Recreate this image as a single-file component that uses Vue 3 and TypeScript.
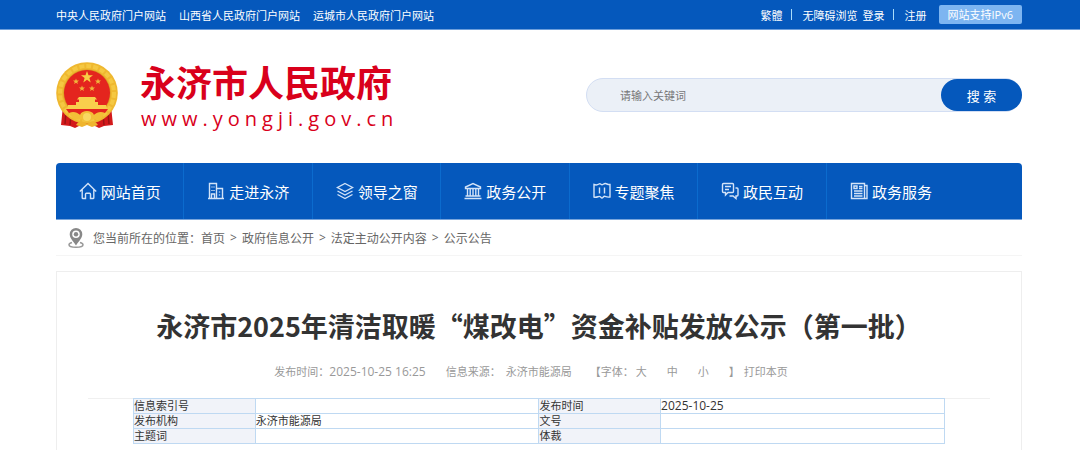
<script setup lang="ts">
import { ref } from 'vue'

interface NavItem {
  label: string
  icon: string
}

const portals: string[] = ['中央人民政府门户网站', '山西省人民政府门户网站', '运城市人民政府门户网站']

const navItems: NavItem[] = [
  { label: '网站首页', icon: 'M.8 9.500 9 1.500l8.200 8M3.200 7.500v8.200c0 .5.300.8.800.8h2.500v-4.300c0-.6.300-.9.900-.9h3.200c.6 0 .9.300.9.900v4.300H14c.5 0 .8-.3.800-.8V7.500' },
  { label: '走进永济', icon: 'M2.500 16V1.500h7V16M9.500 6.500h6V16M1 16.500h16M5 4.500v1M7 4.500v1M5 8v1M7 8v1M4.500 16v-4h3v4M12.500 9.500v1M12.500 12.500v1' },
  { label: '领导之窗', icon: 'M9 1.500 16.500 5.500 9 9.500 1.500 5.500ZM1.500 9 9 13l7.500-4M1.500 12.500 9 16.500l7.500-4' },
  { label: '政务公开', icon: 'M1.500 6.500V5L9 1.500 16.500 5v1.500ZM3.500 7v7M6.200 7v7M9 7v7M11.800 7v7M14.500 7v7M1.500 14h15M.5 16.500h17' },
  { label: '专题聚焦', icon: 'M1 2.500c2 .8 3.500.5 5-.5 1.500-.8 2 .8 3 .8s2-1.600 3.500-1.300S15 2.800 17 2.500v12.500c-2 .5-3.500 0-5-.6S10 16 9 16s-1.500-2-3-1.600S3 15.800 1 15ZM6.500 5.500v6M11.500 5.500v6' },
  { label: '政民互动', icon: 'M2.500 1.500h9c.6 0 1 .4 1 1v7c0 .6-.4 1-1 1H7L4.500 13v-2.500h-2c-.6 0-1-.4-1-1v-7c0-.6.400-1 1-1ZM4 4.500h6M4 7.500h4M14.500 6H16c.6 0 1 .4 1 1v6c0 .6-.4 1-1 1h-1v2.500L12 14H8.500' },
  { label: '政务服务', icon: 'M1.500 1.500h13v15h-13ZM14.500 3.500H17v13h-2.500M4 4h3v2.500H4ZM9 4.500h3.500M9 6.500h3.500M4 9h8.500M4 11.500h8.500M4 14h8.500' },
]

const crumbs: string[] = ['首页', '政府信息公开', '法定主动公开内容', '公示公告']
const sizes: string[] = ['大', '中', '小']

const rows: string[][] = [
  ['信息索引号', '', '发布时间', '2025-10-25'],
  ['发布机构', '永济市能源局', '文号', ''],
  ['主题词', '', '体裁', ''],
]

const keyword = ref('')
</script>

<template>
  <div class="page">
    <div class="topbar">
      <nav class="portals">
        <a v-for="p in portals" :key="p" href="#">{{ p }}</a>
      </nav>
      <div class="tools">
        <a href="#">繁體</a>
        <span class="bar"></span>
        <a href="#">无障碍浏览</a>
        <a class="login" href="#">登录</a>
        <span class="bar"></span>
        <a href="#">注册</a>
        <a class="ipv6" href="#">网站支持IPv6</a>
      </div>
    </div>

    <header class="header">
      <a class="brand" href="#">
        <svg class="emblem" viewBox="0 0 62 66" aria-hidden="true">
          <path d="M7 44 5 63l9 1 5 2 8-4h8l8 4 5-2 9-1-2-19-12 8H19Z" fill="#d3191b" />
          <path d="M10 50 9 62M15 52l-1 11M52 50l1 12M47 52l1 11" stroke="#9c1414" stroke-width="1.500" />
          <circle cx="31" cy="31" r="30.800" fill="#efb830" />
          <circle cx="31" cy="31" r="27" fill="none" stroke="#f5c842" stroke-width="4" stroke-dasharray="5 2" />
          <circle cx="31" cy="31" r="23.800" fill="#dc9f25" />
          <circle cx="31" cy="31" r="23" fill="#e4251e" />
          <path d="m31 9 1.500 4.300h4.500l-3.600 2.700 1.300 4.400L31 17.800l-3.700 2.600 1.300-4.400L25 13.300h4.500Z" fill="#f8cd45" />
          <g fill="#f0b53c">
            <path d="m20 16.500.8 2 2.200.1-1.700 1.300.6 2.100-1.900-1.200-1.900 1.200.6-2.100-1.700-1.300 2.200-.1Z" />
            <path d="m42 16.500.8 2 2.200.1-1.700 1.300.6 2.100-1.900-1.200-1.900 1.200.6-2.100-1.700-1.300 2.200-.1Z" />
            <path d="m26 23.500.8 2 2.200.1-1.700 1.300.6 2.100-1.900-1.200-1.900 1.200.6-2.100-1.700-1.300 2.200-.1Z" />
            <path d="m36 23.500.8 2 2.200.1-1.700 1.300.6 2.100-1.900-1.200-1.900 1.200.6-2.100-1.700-1.300 2.200-.1Z" />
          </g>
          <path d="M23 35h16l2 2.500h-2V40h3v3h8l1 4H11l1-4h8v-3h3v-2.500h-2Z" fill="#f9cf4c" />
          <path d="M10 47h42l-3 4H13Z" fill="#e4251e" />
          <path d="M13 51c4-2 8-1 11 2 1-3 4-4 7-4s6 1 7 4c3-3 7-4 11-2l-5 7-7-1-6 4-6-4-7 1Z" fill="#f3bf37" />
          <circle cx="31" cy="55" r="4" fill="#f9d861" />
          <path d="M20 63c3-5 7-4 11-1 4-3 8-4 11 1l-6 2-5-2-5 2Z" fill="#efb52e" />
        </svg>
        <span class="names">
          <strong>永济市人民政府</strong>
          <span class="domain">www.yongji.gov.cn</span>
        </span>
      </a>
      <form class="search" @submit.prevent>
        <input v-model="keyword" type="text" placeholder="请输入关键词" aria-label="请输入关键词" />
        <button type="submit">搜 索</button>
      </form>
    </header>

    <div class="wrap">
      <nav class="mainnav">
        <a v-for="item in navItems" :key="item.label" href="#">
          <svg viewBox="0 0 18 18" aria-hidden="true"><path :d="item.icon" /></svg>
          <span>{{ item.label }}</span>
        </a>
      </nav>

      <div class="crumbs">
        <svg viewBox="0 0 16 20" aria-hidden="true">
          <path d="M4 14.500c-2 .5-3 1.200-3 2.200 0 1.600 3 2.500 7 2.500s7-.9 7-2.500c0-1-1-1.700-3-2.200" fill="none" stroke="#999" stroke-width="1.500" />
          <path fill-rule="evenodd" d="M8 0a6.300 6.300 0 0 0-6.300 6.300C1.700 10 5 13 8 17.500c3-4.500 6.300-7.500 6.300-11.200A6.300 6.300 0 0 0 8 0Zm0 2.500a3.800 3.800 0 1 1 0 7.600 3.800 3.800 0 0 1 0-7.600Z" fill="#888" />
          <circle cx="8" cy="6.300" r="2.200" fill="#888" />
        </svg>
        <span>您当前所在的位置：</span>
        <template v-for="(c, i) in crumbs" :key="c">
          <span v-if="i > 0" class="sep">&gt;</span>
          <a href="#">{{ c }}</a>
        </template>
      </div>

      <main class="card">
        <h1>永济市2025年清洁取暖“煤改电”资金补贴发放公示（第一批）</h1>
        <div class="meta">
          <span>发布时间：<time>2025-10-25 16:25</time></span>
          <span class="source"><span>信息来源：</span><span>永济市能源局</span></span>
          <span class="sizes">
            <span class="size-label">【字体：</span>
            <button v-for="s in sizes" :key="s" type="button">{{ s }}</button>
            <span>】</span>
          </span>
          <button type="button">打印本页</button>
        </div>
        <div class="detail">
          <table>
            <tbody>
              <tr v-for="row in rows" :key="row[0]">
                <th scope="row">{{ row[0] }}</th>
                <td>{{ row[1] }}</td>
                <th scope="row">{{ row[2] }}</th>
                <td>{{ row[3] }}</td>
              </tr>
            </tbody>
          </table>
        </div>
      </main>
    </div>
  </div>
</template>

<style>
body {
  margin: 0;
  background: #fff;
}
</style>

<style scoped>
.page {
  height: 100vh;
  overflow: hidden;
  font-family: "Open Sans", "Noto Sans CJK SC", sans-serif;
  font-size: 11px;
  color: #333;
}
.page * {
  box-sizing: border-box;
}
a {
  color: inherit;
  text-decoration: none;
}
button {
  border: 0;
  padding: 0;
  background: none;
  font: inherit;
  color: inherit;
  cursor: pointer;
}
.topbar {
  display: flex;
  justify-content: space-between;
  align-items: center;
  height: 30px;
  padding: 0 58px 0 56px;
  background: #0558bc;
  border-bottom: 1px solid #6d9edb;
  color: #fff;
}
.portals {
  display: flex;
  gap: 13px;
}
.tools {
  display: flex;
  align-items: center;
}
.bar {
  width: 1px;
  height: 11px;
  margin: 0 11px 0 8px;
  background: #a9dcfa;
}
.login {
  margin-left: 5px;
}
.ipv6 {
  height: 19px;
  margin-left: 12px;
  padding: 0 9px;
  border-radius: 2px;
  background: #7db5f1;
  line-height: 19px;
}
.header {
  display: flex;
  justify-content: space-between;
  height: 133px;
  padding: 32px 58px 0 56px;
}
.brand {
  display: flex;
  gap: 22px;
  color: #d9001b;
}
.emblem {
  width: 62px;
  height: 66px;
}
.names {
  display: flex;
  flex-direction: column;
}
.names strong {
  font-family: "Liberation Sans", "Noto Sans CJK SC", sans-serif;
  font-size: 36px;
  line-height: 46px;
  font-weight: 700;
}
.domain {
  padding-left: 1px;
  font-size: 20px;
  line-height: 22px;
  letter-spacing: 5px;
}
.search {
  display: flex;
  width: 436px;
  height: 34px;
  margin-top: 16px;
  border: 1px solid #d3def3;
  border-radius: 17px;
  background: #ebf0f7;
}
.search input {
  flex: 1;
  min-width: 0;
  padding: 0 0 0 33px;
  border: 0;
  outline: 0;
  background: none;
  font: inherit;
}
.search input::placeholder {
  color: #777;
  opacity: 1;
}
.search button {
  width: 81px;
  margin-right: -1px;
  border-radius: 17px;
  background: #0558bc;
  color: #fff;
  font-size: 13px;
}
.wrap {
  padding: 0 58px 0 56px;
}
.mainnav {
  display: flex;
  height: 57px;
  border-radius: 4px 4px 0 0;
  border-bottom: 1px solid #79a5dc;
  background: #0558bc;
  color: #fff;
  font-size: 15px;
}
.mainnav a {
  display: flex;
  flex: 0 0 13.3%;
  justify-content: center;
  align-items: center;
  gap: 4px;
  border-right: 1px solid #0b6bce;
}
.mainnav a:last-child {
  border-right: 0;
}
.mainnav svg {
  width: 18px;
  height: 18px;
  fill: none;
  stroke: #d3e3f8;
  stroke-width: 1.4;
}
.crumbs {
  display: flex;
  align-items: center;
  height: 36px;
  padding-left: 12px;
  border-bottom: 1px solid #f5f5f5;
  color: #666;
  font-size: 12px;
}
.crumbs svg {
  width: 16px;
  height: 20px;
  margin-right: 9px;
}
.sep {
  margin: 0 5px;
}
.card {
  height: 200px;
  margin-top: 15px;
  padding: 34px 31px 0;
  border: 1px solid #eee;
}
h1 {
  margin: 0;
  font-family: "Noto Sans CJK SC", sans-serif;
  font-size: 27px;
  line-height: 40px;
  font-weight: 700;
  text-align: center;
  white-space: nowrap;
}
.meta {
  display: flex;
  justify-content: center;
  margin-top: 16px;
  padding-right: 16px;
  line-height: 20px;
  color: #999;
}
.meta time {
  font-size: 12px;
}
.source {
  display: flex;
  gap: 5px;
  margin: 0 18px 0 20px;
}
.sizes {
  display: flex;
  margin-right: 4px;
}
.size-label {
  margin-right: 2px;
}
.sizes button {
  margin-right: 20px;
}
.detail {
  margin-top: 16px;
  border-top: 1px solid #f0f0f0;
}
table {
  width: 90%;
  margin: -1px auto 0;
  border-collapse: collapse;
  table-layout: fixed;
  line-height: 14px;
}
th,
td {
  height: 15px;
  padding: 0;
  border: 1px solid #bfd9f2;
  text-align: left;
  font-weight: 400;
}
th {
  width: 15%;
  background: #f1f3f9;
}
td {
  width: 35%;
}
td:last-child {
  font-size: 12px;
}
</style>
